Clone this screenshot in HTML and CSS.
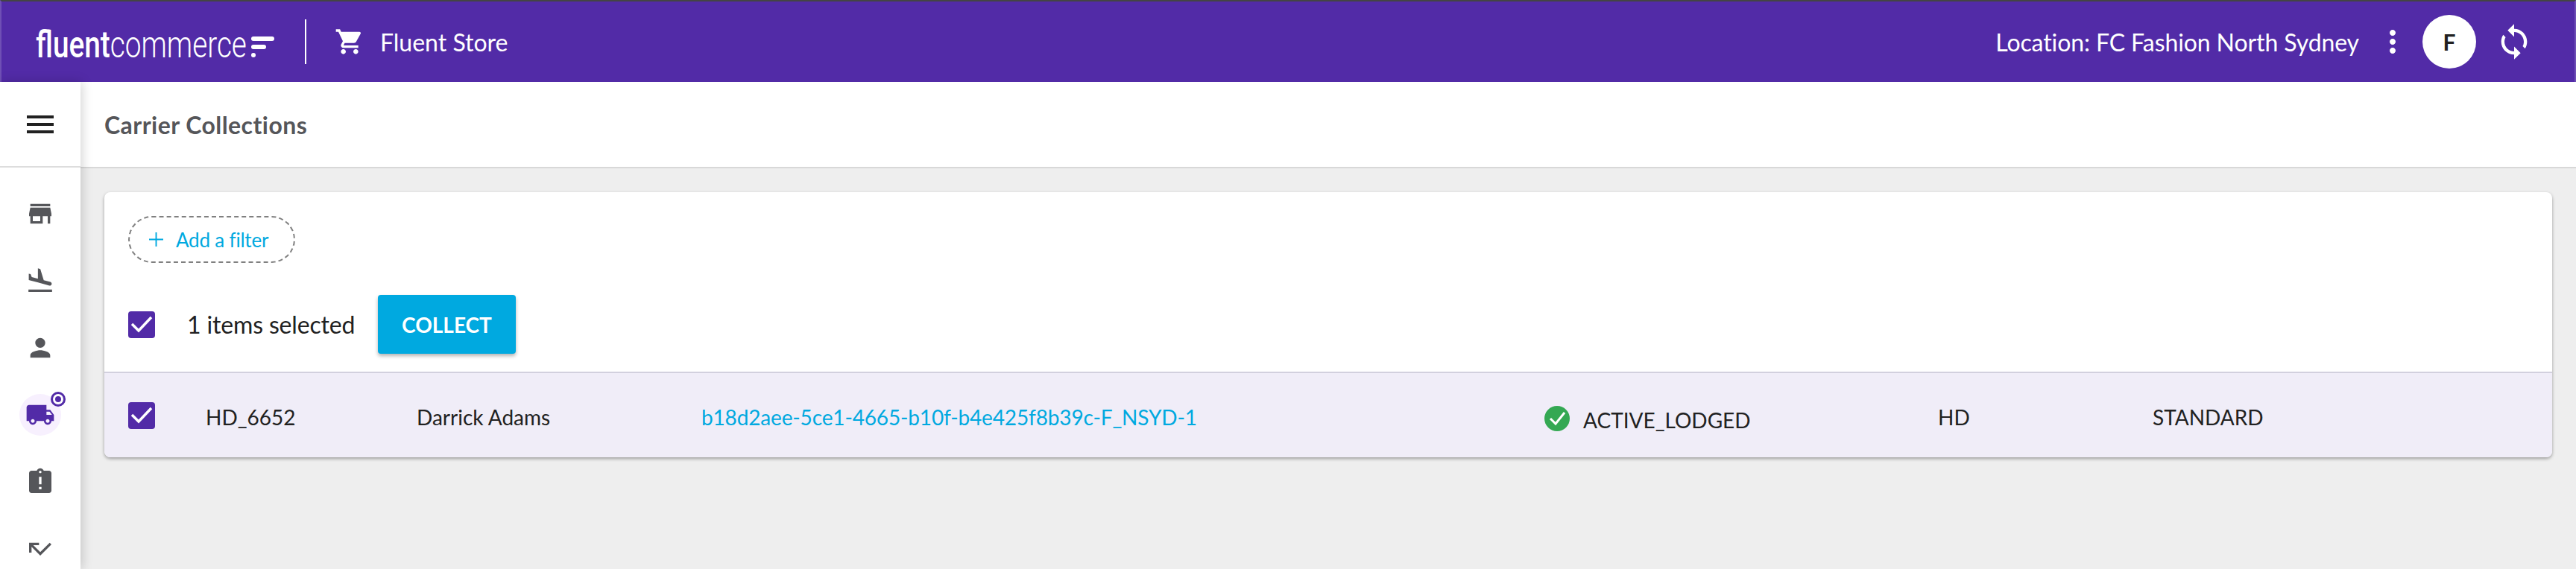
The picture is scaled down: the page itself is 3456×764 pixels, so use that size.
FILE: index.html
```html
<!DOCTYPE html>
<html lang="en">
<head>
  <meta charset="UTF-8" />
  <title>Carrier Collections</title>
  <link rel="stylesheet" href="styles.css">
</head>
<body>

  <!-- TOP BAR -->
  <header class="topbar">
    <div class="logo">
      <span class="logo-text"><span class="logo-fluent">fluent</span><span class="logo-commerce">commerce</span></span>
      <span class="logo-mark"><i class="bar-long"></i><i class="bar-short"></i><i class="bar-dot"></i></span>
    </div>
    <div class="topbar-divider"></div>
    <svg class="cart-icon" viewBox="0 0 24 24"><path d="M7 18c-1.1 0-1.99.9-1.99 2S5.9 22 7 22s2-.9 2-2-.9-2-2-2zM1 2v2h2l3.6 7.59-1.35 2.45c-.16.28-.25.61-.25.96 0 1.1.9 2 2 2h12v-2H7.42c-.14 0-.25-.11-.25-.25l.03-.12.9-1.63h7.45c.75 0 1.41-.41 1.75-1.03l3.58-6.47c.08-.14.12-.31.12-.48 0-.55-.45-1-1-1H5.21l-.94-2H1zm16 16c-1.1 0-1.99.9-1.99 2s.89 2 1.99 2 2-.9 2-2-.9-2-2-2z"/></svg>
    <span class="store-name">Fluent Store</span>
    <span class="location">Location: FC Fashion North Sydney</span>
    <svg class="more-icon" viewBox="0 0 24 24"><path d="M12 8c1.1 0 2-.9 2-2s-.9-2-2-2-2 .9-2 2 .9 2 2 2zm0 2c-1.1 0-2 .9-2 2s.9 2 2 2 2-.9 2-2-.9-2-2-2zm0 6c-1.1 0-2 .9-2 2s.9 2 2 2 2-.9 2-2-.9-2-2-2z"/></svg>
    <div class="avatar">F</div>
    <svg class="sync-icon" viewBox="0 0 24 24"><path d="M12 4V1L8 5l4 4V6c3.31 0 6 2.69 6 6 0 1.01-.25 1.97-.7 2.8l1.46 1.46C19.54 15.03 20 13.57 20 12c0-4.42-3.58-8-8-8zm0 14c-3.31 0-6-2.69-6-6 0-1.01.25-1.97.7-2.8L5.24 7.74C4.46 8.97 4 10.43 4 12c0 4.42 3.58 8 8 8v3l4-4-4-4v3z"/></svg>
  </header>

  <div class="layout">
    <!-- SIDEBAR -->
    <aside class="sidebar">
      <div class="menu-row">
        <svg class="menu-icon" viewBox="0 0 24 24"><path d="M3 18h18v-2H3v2zm0-5h18v-2H3v2zm0-7v2h18V6H3z"/></svg>
      </div>
      <nav class="side-nav">
        <div class="side-item"><svg viewBox="0 0 24 24"><path d="M20 4H4v2h16V4zm1 10v-2l-1-5H4l-1 5v2h1v6h10v-6h4v6h2v-6h1zm-9 4H6v-4h6v4z"/></svg></div>
        <div class="side-item"><svg viewBox="0 0 24 24"><path d="M2.5 19h19v2h-19zm7.18-5.73l4.35 1.16 5.31 1.42c.8.21 1.62-.26 1.84-1.06.21-.8-.26-1.62-1.06-1.84l-5.31-1.42-2.76-9.02L10.12 2v8.28L5.15 8.95l-.93-2.32-1.45-.39v5.17l1.6.43 5.31 1.43z"/></svg></div>
        <div class="side-item"><svg viewBox="0 0 24 24"><path d="M12 12c2.21 0 4-1.79 4-4s-1.79-4-4-4-4 1.79-4 4 1.79 4 4 4zm0 2c-2.67 0-8 1.34-8 4v2h16v-2c0-2.66-5.33-4-8-4z"/></svg></div>
        <div class="side-item active">
          <svg viewBox="0 0 24 24"><path d="M20 8h-3V4H3c-1.1 0-2 .9-2 2v11h2c0 1.66 1.34 3 3 3s3-1.34 3-3h6c0 1.66 1.34 3 3 3s3-1.34 3-3h2v-5l-3-4zM6 18.5c-.83 0-1.5-.67-1.5-1.5s.67-1.5 1.5-1.5 1.5.67 1.5 1.5-.67 1.5-1.5 1.5zm13.5-9l1.96 2.5H17V9.5h2.5zm-1.5 9c-.83 0-1.5-.67-1.5-1.5s.67-1.5 1.5-1.5 1.5.67 1.5 1.5-.67 1.5-1.5 1.5z"/></svg>
          <span class="side-badge"></span>
        </div>
        <div class="side-item"><svg viewBox="0 0 24 24"><path d="M19 3h-4.18C14.4 1.84 13.3 1 12 1c-1.3 0-2.4.84-2.82 2H5c-1.1 0-2 .9-2 2v14c0 1.1.9 2 2 2h14c1.1 0 2-.9 2-2V5c0-1.1-.9-2-2-2zm-6 15h-2v-2h2v2zm0-4h-2V8h2v6zm-1-9c-.55 0-1-.45-1-1s.45-1 1-1 1 .45 1 1-.45 1-1 1z"/></svg></div>
        <div class="side-item"><svg viewBox="0 0 24 24"><path d="M19.59 7L12 14.59 6.41 9H11V7H3v8h2v-4.59l7 7 9-9z"/></svg></div>
      </nav>
    </aside>

    <!-- MAIN -->
    <main class="main">
      <div class="page-title"><h1>Carrier Collections</h1></div>
      <div class="content">
        <section class="card">
          <div class="filter-row">
            <button class="add-filter">
              <svg viewBox="0 0 20 20"><path d="M9 0h2v9h9v2h-9v9H9v-9H0V9h9z"/></svg>
              <span>Add a filter</span>
            </button>
          </div>
          <div class="select-row">
            <span class="checkbox"><svg viewBox="0 0 36 36"><path d="M5 17l9 9L31 8"/></svg></span>
            <span class="select-count">1 items selected</span>
            <button class="collect-btn">COLLECT</button>
          </div>
          <div class="data-row">
            <span class="checkbox"><svg viewBox="0 0 36 36"><path d="M5 17l9 9L31 8"/></svg></span>
            <span class="cell">HD_6652</span>
            <span class="cell">Darrick Adams</span>
            <a class="cell row-link" href="#">b18d2aee-5ce1-4665-b10f-b4e425f8b39c-F_NSYD-1</a>
            <span class="status">
              <svg viewBox="0 0 34 34"><circle cx="17" cy="17" r="17"/><path d="M8 17l7 7L27 9"/></svg>
              <span class="status-text">ACTIVE_LODGED</span>
            </span>
            <span class="cell">HD</span>
            <span class="cell">STANDARD</span>
          </div>
        </section>
      </div>
    </main>
  </div>

</body>
</html>
```

FILE: styles.css
```css
* {
  box-sizing: border-box;
}

html, body {
  height: 100%;
}

body {
  margin: 0;
  font-family: 'Lato', sans-serif;
  color: #212121;
  background-color: #eeeeee;
  overflow: hidden;
}

/* ===== TOP BAR ===== */
.topbar {
  height: 110px;
  display: flex;
  align-items: center;
  background-color: #522ba7;
  border-top: 2px solid #444444;
  border-left: 2px solid #6f4fb5;
  border-right: 2px solid #6f4fb5;
  color: white;
  padding: 0 55px 0 46px;
}

.logo {
  width: 322px;
  height: 50px;
  display: flex;
  align-items: flex-end;
  margin-top: 8px;
}

.logo-text {
  width: 289px;
  flex-shrink: 0;
  font-family: 'Roboto', sans-serif;
  font-size: 50px;
  line-height: 50px;
  white-space: nowrap;
  transform: scaleX(0.775);
  transform-origin: left;
}

.logo-fluent {
  font-weight: 500;
}

.logo-commerce {
  font-weight: 300;
}

.logo-mark {
  display: flex;
  flex-direction: column;
  gap: 5px;
  width: 31px;
  margin-bottom: 8px;
}

.logo-mark i {
  display: block;
  height: 6px;
  background-color: white;
  border-radius: 3px;
}

.logo-mark .bar-long {
  width: 31px;
}

.logo-mark .bar-short {
  width: 20px;
}

.logo-mark .bar-dot {
  width: 6px;
}

.topbar-divider {
  width: 2px;
  height: 60px;
  background-color: white;
  margin-left: 39px;
}

.cart-icon {
  width: 40px;
  height: 40px;
  fill: white;
  margin-left: 38px;
}

.store-name {
  font-size: 32px;
  margin-left: 21px;
}

.location {
  font-size: 32px;
  letter-spacing: -0.1px;
  margin-left: auto;
}

.more-icon {
  width: 48px;
  height: 48px;
  fill: white;
  margin-left: 21px;
}

.avatar {
  width: 72px;
  height: 72px;
  border-radius: 50%;
  background-color: white;
  color: #212121;
  font-size: 30px;
  font-weight: 700;
  display: flex;
  align-items: center;
  justify-content: center;
  margin-left: 16px;
}

.sync-icon {
  width: 52px;
  height: 52px;
  fill: white;
  margin-left: 25px;
}

/* ===== LAYOUT ===== */
.layout {
  display: flex;
  height: 654px;
}

.sidebar {
  width: 108px;
  flex-shrink: 0;
  background-color: white;
  box-shadow: 2px 0 14px rgba(0, 0, 0, 0.18);
  position: relative;
  z-index: 1;
}

.menu-row {
  height: 115px;
  display: flex;
  align-items: center;
  justify-content: center;
  border-bottom: 2px solid #dddddd;
}

.menu-icon {
  width: 48px;
  height: 48px;
  fill: #212121;
}

.side-nav {
  padding-top: 17px;
}

.side-item {
  position: relative;
  height: 90px;
  display: flex;
  align-items: center;
  justify-content: center;
}

.side-item svg {
  width: 40px;
  height: 40px;
  fill: #55565a;
}

.side-item.active svg {
  position: relative;
  fill: #522ba7;
}

.side-item.active::before {
  content: "";
  position: absolute;
  left: 26px;
  top: 17px;
  width: 56px;
  height: 56px;
  border-radius: 50%;
  background-color: #f7f0fe;
}

.side-badge {
  position: absolute;
  left: 68px;
  top: 14px;
  width: 20px;
  height: 20px;
  border-radius: 50%;
  border: 3px solid #522ba7;
  background-color: white;
}

.side-badge::after {
  content: "";
  position: absolute;
  left: 3px;
  top: 3px;
  width: 8px;
  height: 8px;
  border-radius: 50%;
  background-color: #522ba7;
}

/* ===== MAIN ===== */
.main {
  flex: 1;
  min-width: 0;
}

.page-title {
  height: 116px;
  display: flex;
  align-items: center;
  background-color: white;
  border-bottom: 2px solid #d8d8d8;
  padding: 0 32px;
}

.page-title h1 {
  margin: 0;
  font-size: 32px;
  font-weight: 700;
  letter-spacing: 0.45px;
  color: #55565a;
}

.content {
  padding: 32px;
}

.card {
  background-color: white;
  border-radius: 8px;
  box-shadow: 0 2px 4px rgba(0, 0, 0, 0.35);
  overflow: hidden;
}

.filter-row {
  padding: 32px 32px 0;
}

.add-filter {
  width: 224px;
  height: 63px;
  display: flex;
  align-items: center;
  gap: 17px;
  padding: 0 0 0 26px;
  background: none;
  border: 2px dashed #808080;
  border-radius: 32px;
  color: #00a9e0;
  font-family: inherit;
  font-size: 26px;
  letter-spacing: -0.2px;
}

.add-filter svg {
  width: 19px;
  height: 19px;
  fill: #00a9e0;
}

.select-row {
  display: flex;
  align-items: center;
  padding: 43px 32px 24px;
}

.checkbox {
  width: 36px;
  height: 36px;
  flex-shrink: 0;
  border-radius: 4px;
  background-color: #522ba7;
  display: block;
}

.checkbox svg {
  display: block;
  width: 36px;
  height: 36px;
  fill: none;
  stroke: white;
  stroke-width: 3.5;
}

.select-count {
  font-size: 32px;
  letter-spacing: -0.15px;
  margin-left: 43px;
  width: 256px;
}

.collect-btn {
  width: 185px;
  height: 79px;
  background-color: #00a9e0;
  color: white;
  border: none;
  border-radius: 4px;
  box-shadow: 0 3px 5px rgba(0, 0, 0, 0.3);
  font-family: inherit;
  font-size: 28px;
  font-weight: 700;
}

.data-row {
  display: grid;
  grid-template-columns: 104px 283px 382px 1131px 528px 288px 1fr;
  align-items: center;
  height: 115px;
  padding-left: 32px;
  background-color: #f0edf8;
  border-top: 2px solid #d2d0de;
  font-size: 28px;
}

.cell {
  padding-top: 5px;
}

.row-link {
  color: #00a9e0;
  letter-spacing: -0.15px;
  text-decoration: none;
}

.status {
  display: flex;
  align-items: center;
  gap: 18px;
  padding-top: 8px;
}

.status svg {
  width: 34px;
  height: 34px;
  fill: #34a853;
}

.status svg path {
  fill: none;
  stroke: white;
  stroke-width: 3;
}

.status-text {
  padding-top: 5px;
}
```
